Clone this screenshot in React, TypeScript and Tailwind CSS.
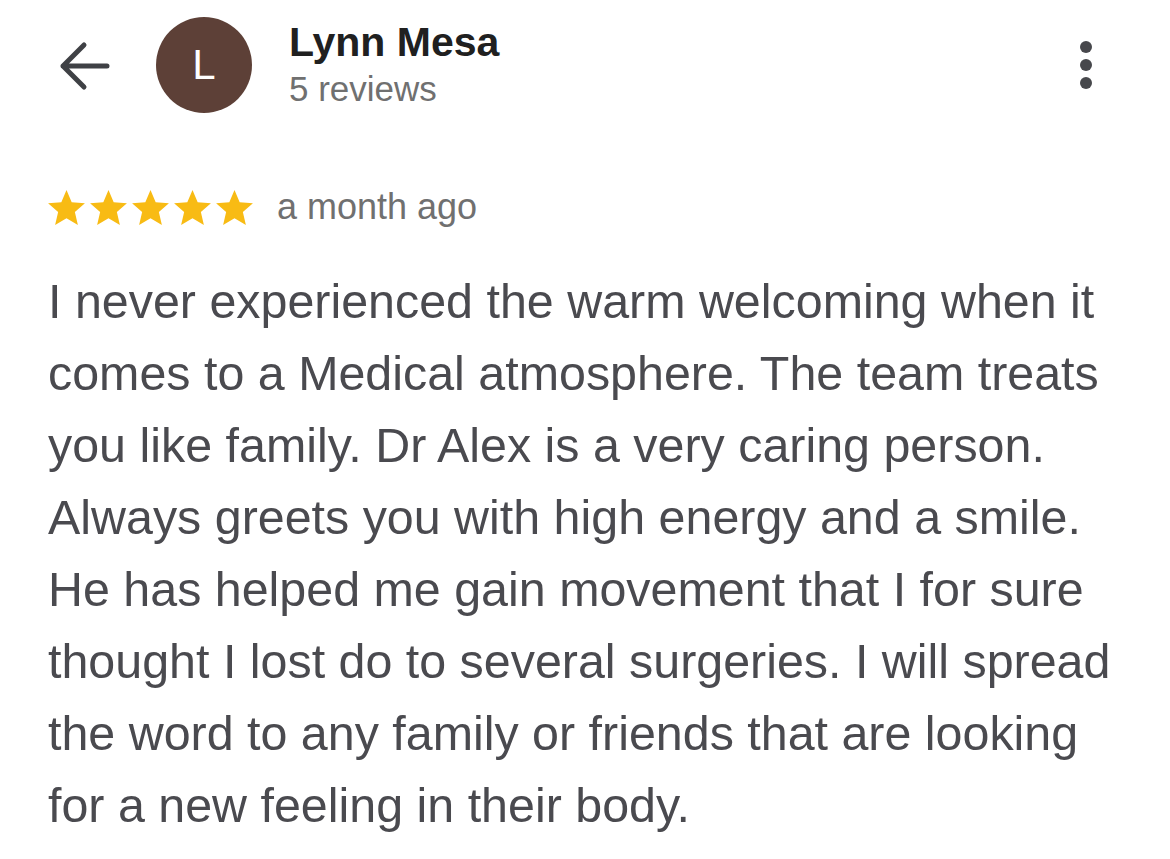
import React from 'react';

const lines = [
  'I never experienced the warm welcoming when it',
  'comes to a Medical atmosphere. The team treats',
  'you like family. Dr Alex is a very caring person.',
  'Always greets you with high energy and a smile.',
  'He has helped me gain movement that I for sure',
  'thought I lost do to several surgeries. I will spread',
  'the word to any family or friends that are looking',
  'for a new feeling in their body.',
];

function Star() {
  return (
    <svg width="37" height="35" viewBox="2 2 20 19" className="shrink-0">
      <path fill="#f8bb14" d="M12 17.27L18.18 21l-1.64-7.03L22 9.24l-7.19-.61L12 2 9.19 8.63 2 9.24l5.46 4.73L5.82 21z" />
    </svg>
  );
}

export default function App() {
  return (
    <div className="w-[1170px] h-[859px] bg-white overflow-hidden" style={{ fontFamily: '"Liberation Sans", Arial, sans-serif' }}>
      {/* Header */}
      <div className="flex items-start pt-[17px]">
        <svg width="52" height="50" viewBox="0 0 52 50" className="ml-[58px] mt-[24px] shrink-0">
          <path d="M49 25H5M26 4L5 25l21 21" fill="none" stroke="#3f4145" strokeWidth="5" strokeLinecap="round" strokeLinejoin="round" />
        </svg>
        <div className="ml-[46px] w-24 h-24 rounded-full bg-[#5d4037] flex items-center justify-center text-white text-[42px] leading-none shrink-0">
          L
        </div>
        <div className="ml-[37px] flex flex-col">
          <div className="mt-[5px] text-[41px] leading-none font-bold text-[#202020]">Lynn Mesa</div>
          <div className="mt-[8px] text-[35px] leading-none text-[#707070]">5 reviews</div>
        </div>
        <div className="ml-auto mr-[78px] mt-[24px] flex flex-col gap-[6px]">
          <span className="w-3 h-3 rounded-full bg-[#47484c]" />
          <span className="w-3 h-3 rounded-full bg-[#47484c]" />
          <span className="w-3 h-3 rounded-full bg-[#47484c]" />
        </div>
      </div>

      {/* Rating row */}
      <div className="mt-[76px] pl-[48px] flex items-center">
        <div className="flex gap-[5px]">
          <Star />
          <Star />
          <Star />
          <Star />
          <Star />
        </div>
        <span className="ml-[24px] text-[36px] leading-none text-[#707070]">a month ago</span>
      </div>

      {/* Review text */}
      <p className="mt-[40px] pl-[48px] text-[48.4px] leading-[72px] text-[#4a4a4f] whitespace-nowrap">
        {lines.map((l, i) => (
          <React.Fragment key={i}>
            {l}
            {i < lines.length - 1 && <br />}
          </React.Fragment>
        ))}
      </p>
    </div>
  );
}
